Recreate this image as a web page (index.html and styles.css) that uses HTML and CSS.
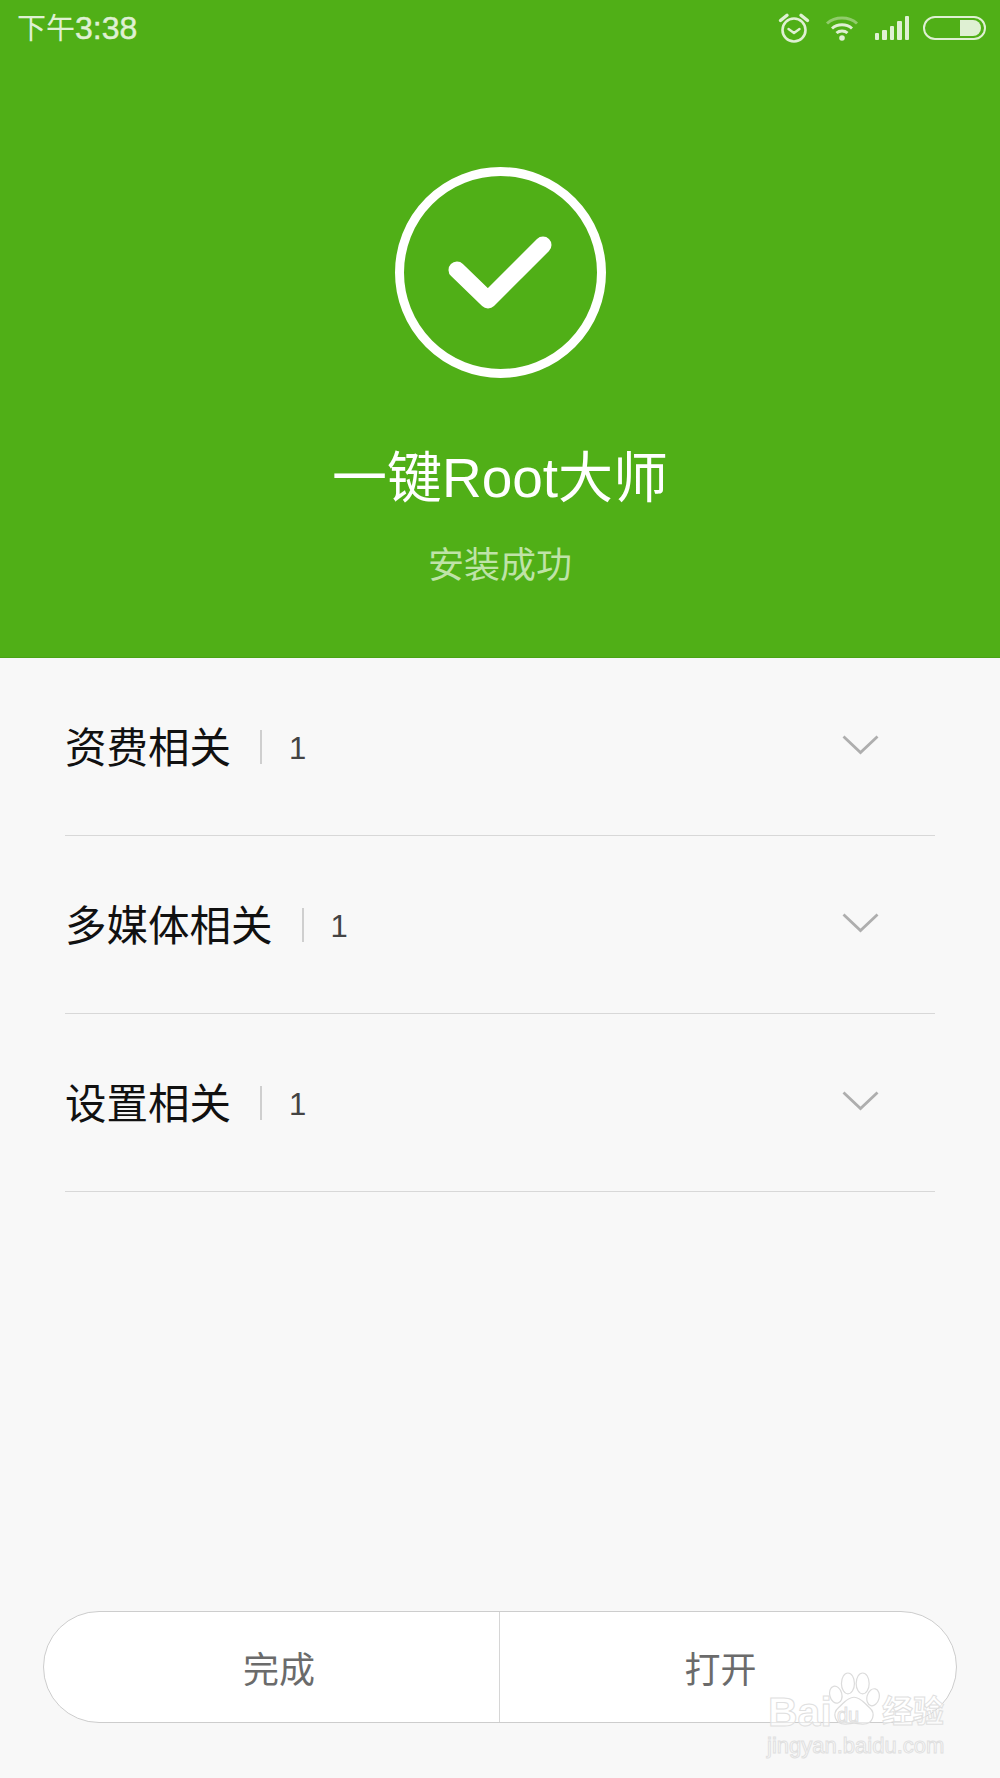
FILE: index.html
```html
<!DOCTYPE html>
<html lang="zh-CN">
<head>
    <meta charset="UTF-8">
    <title>安装成功</title>
    <link rel="stylesheet" href="styles.css">
</head>
<body>
<div class="page">
    <div class="hero">
        <div class="statusBar">
            <span class="time">下午<b>3:38</b></span>
            <div class="statusIcons">
                <svg class="icoAlarm" width="32" height="32" viewBox="0 0 32 32">
                    <circle cx="16" cy="18" r="11.5" fill="none" stroke="#dff0d3" stroke-width="2.6"/>
                    <path d="M10.5 17l5.5 4 5.5-4" fill="none" stroke="#dff0d3" stroke-width="2.4" stroke-linecap="round" stroke-linejoin="round"/>
                    <path d="M2.5 8.5L9 3.200M29.500 8.500L23 3.200" stroke="#dff0d3" stroke-width="3.400" stroke-linecap="round"/>
                </svg>
                <svg class="icoWifi" width="34" height="26" viewBox="0 0 34 26">
                    <path d="M2 8.500C10 1.200 24 1.200 32 8.500" fill="none" stroke="#dff0d3" stroke-opacity=".45" stroke-width="3"/>
                    <path d="M7 13.500C12.500 8.600 21.500 8.600 27 13.500" fill="none" stroke="#dff0d3" stroke-width="3"/>
                    <path d="M11.500 18C14.500 15.300 19.500 15.300 22.500 18" fill="none" stroke="#dff0d3" stroke-width="3"/>
                    <circle cx="17" cy="23" r="2.800" fill="#dff0d3"/>
                </svg>
                <div class="signal">
                    <i class="s1"></i><i class="s2"></i><i class="s3"></i><i class="s4"></i><i class="s5"></i>
                </div>
                <div class="battery"><i></i></div>
            </div>
        </div>
        <svg class="okIcon" width="211" height="211" viewBox="0 0 211 211">
            <circle cx="105.500" cy="105.500" r="101" fill="none" stroke="#fff" stroke-width="9"/>
            <path d="M62 103l31 30 55-55" fill="none" stroke="#fff" stroke-width="17" stroke-linecap="round" stroke-linejoin="round"/>
        </svg>
        <h1 class="appName">一键Root大师</h1>
        <p class="appState">安装成功</p>
    </div>

    <ul class="permList">
        <li>
            <span class="permName">资费相关</span>
            <span class="permNum">1</span>
            <svg class="arrow" width="37" height="20" viewBox="0 0 37 20"><path d="M1.500 1.500l17 16 17-16" fill="none" stroke="#aeaeae" stroke-width="2.800"/></svg>
        </li>
        <li>
            <span class="permName">多媒体相关</span>
            <span class="permNum">1</span>
            <svg class="arrow" width="37" height="20" viewBox="0 0 37 20"><path d="M1.500 1.500l17 16 17-16" fill="none" stroke="#aeaeae" stroke-width="2.800"/></svg>
        </li>
        <li>
            <span class="permName">设置相关</span>
            <span class="permNum">1</span>
            <svg class="arrow" width="37" height="20" viewBox="0 0 37 20"><path d="M1.500 1.500l17 16 17-16" fill="none" stroke="#aeaeae" stroke-width="2.800"/></svg>
        </li>
    </ul>

    <div class="btnGroup">
        <div class="btn btnLeft">完成</div>
        <div class="btn btnRight">打开</div>
    </div>

    <div class="watermark">
        <svg class="paw" width="52" height="56" viewBox="0 0 60 62">
            <g fill="rgba(255,255,255,.55)" stroke="#dcdcdc" stroke-width="1.400">
                <ellipse cx="9" cy="26" rx="7" ry="10" transform="rotate(-15 9 26)"/>
                <ellipse cx="23" cy="13" rx="7.500" ry="12"/>
                <ellipse cx="40" cy="13" rx="7.500" ry="12"/>
                <ellipse cx="52" cy="29" rx="7" ry="10" transform="rotate(15 52 29)"/>
                <path d="M30 29c8 0 12 7 18 12 7 6 5 19-8 19-4 0-7-1-10-1s-6 1-10 1C7 60 5 47 12 41c6-5 10-12 18-12z"/>
            </g>
        </svg>
        <span class="wmBai">Bai</span>
        <span class="wmDu">du</span>
        <span class="wmJy">经验</span>
        <span class="wmUrl">jingyan.baidu.com</span>
    </div>
</div>
</body>
</html>
```

FILE: styles.css
```css
*{
    margin: 0;
    padding: 0;
    list-style: none;
    box-sizing: border-box;
}
html,body{
    width: 100%;
    height: 100%;
}
body{
    font-family: "Liberation Sans", "Noto Sans CJK SC", sans-serif;
}
.page{
    position: relative;
    display: flex;
    flex-direction: column;
    width: 1000px;
    height: 1778px;
    overflow: hidden;
    background: #f8f8f8;
}
.hero{
    display: flex;
    flex-direction: column;
    align-items: center;
    height: 658px;
    background: #50af17;
    border-bottom: 1px solid #4aa315;
}
.statusBar{
    display: flex;
    justify-content: space-between;
    align-items: center;
    width: 100%;
    height: 56px;
    padding: 0 14px 0 17px;
}
.time{
    margin-bottom: 4px;
    font-size: 29px;
    color: #dff0d3;
}
.time b{
    font-size: 32px;
    font-weight: normal;
    -webkit-text-stroke: .5px #dff0d3;
}
.statusIcons{
    display: flex;
    align-items: center;
}
.icoAlarm{
    margin: 0 15px 0 0;
}
.icoWifi{
    margin: 0 16px 0 0;
}
.signal{
    display: flex;
    align-items: flex-end;
    gap: 3px;
    height: 24px;
    margin: 0 14px 0 0;
}
.signal i{
    display: block;
    width: 4.500px;
    background: #dff0d3;
    border-radius: 1px;
}
.signal .s1{ height: 7px; }
.signal .s2{ height: 10px; }
.signal .s3{ height: 14px; }
.signal .s4{ height: 19px; }
.signal .s5{ height: 24px; }
.battery{
    display: flex;
    justify-content: flex-end;
    width: 63px;
    height: 24px;
    padding: 2px 3px;
    border: 2px solid #dff0d3;
    border-radius: 12px;
}
.battery i{
    display: block;
    width: 21px;
    background: #dff0d3;
    border-radius: 0 8px 8px 0;
}
.okIcon{
    margin-top: 111px;
}
.appName{
    margin-top: 67px;
    font-size: 55px;
    line-height: 66px;
    font-weight: normal;
    color: #fff;
}
.appState{
    margin-top: 31px;
    font-size: 36px;
    line-height: 48px;
    color: #bfe3a8;
}
.permList li{
    display: flex;
    align-items: center;
    height: 178px;
    margin: 0 65px;
    padding-top: 5px;
    border-bottom: 1px solid #d8d8d8;
}
.permName{
    font-size: 41.500px;
    line-height: 48px;
    color: #111;
}
.permNum{
    display: flex;
    align-items: center;
    height: 34px;
    margin: 0 0 5px 29px;
    padding: 4px 0 0 27px;
    border-left: 2px solid #cfcfcf;
    font-size: 31px;
    color: #444;
}
.arrow{
    margin-left: auto;
    margin-right: 56px;
    margin-bottom: 8px;
}
.btnGroup{
    display: flex;
    height: 112px;
    margin: auto 43px 55px;
    background: #fff;
    border: 1px solid #cdcdcd;
    border-radius: 56px;
}
.btn{
    display: flex;
    justify-content: center;
    align-items: center;
    font-size: 36px;
    color: #6b6b6b;
}
.btnLeft{
    width: 455px;
    padding-left: 15px;
}
.btnRight{
    flex: 1;
    padding-right: 15px;
    border-left: 1px solid #d6d6d6;
}
/* 水印 */
.watermark{
    position: absolute;
    left: 760px;
    top: 1660px;
    width: 200px;
    height: 100px;
    color: rgba(255,255,255,.55);
    -webkit-text-stroke: 1px #e0e0e0;
}
.watermark span{
    position: absolute;
    white-space: nowrap;
    line-height: 1;
}
.paw{
    position: absolute;
    left: 68px;
    top: 11px;
}
.wmBai{
    left: 8px;
    top: 32px;
    font-size: 41px;
    font-weight: bold;
}
.wmDu{
    left: 77px;
    top: 45px;
    font-size: 20px;
}
.wmJy{
    left: 122px;
    top: 36px;
    font-size: 31px;
    font-weight: bold;
}
.wmUrl{
    left: 7px;
    top: 75px;
    font-size: 22px;
}
```
